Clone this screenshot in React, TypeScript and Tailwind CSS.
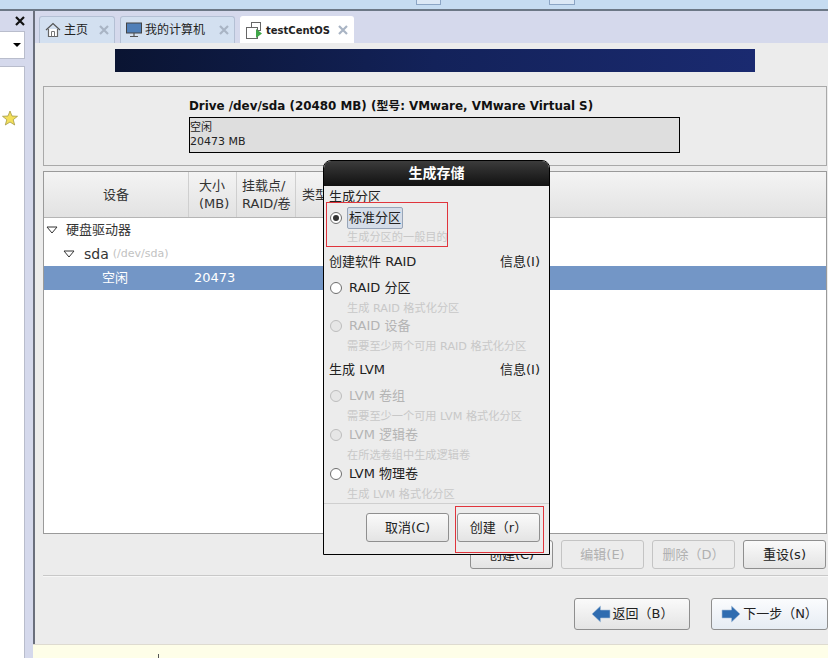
import React from 'react';

const font = { fontFamily: '"DejaVu Sans", "Noto Sans CJK SC", sans-serif' };

const CloseX = ({ className = 'text-[#a9b4c4]' }: { className?: string }) => (
  <svg width="10" height="10" viewBox="0 0 10 10" className={className}>
    <path d="M1 1 L9 9 M9 1 L1 9" stroke="currentColor" strokeWidth="2.2" />
  </svg>
);

const HomeIcon = () => (
  <svg width="16" height="16" viewBox="0 0 16 16" fill="none" className="shrink-0">
    <path d="M1 8 L8 1.5 L15 8" stroke="#555" strokeWidth="1.2" />
    <path d="M3.5 7 V14.5 H12.5 V7" stroke="#666" strokeWidth="1.2" fill="#fff" />
    <path d="M6.5 14.5 V9.5 H9.5 V14.5" stroke="#777" strokeWidth="1" />
  </svg>
);

const MonitorIcon = () => (
  <svg width="16" height="16" viewBox="0 0 16 16" className="shrink-0">
    <rect x="0.5" y="1" width="15" height="10" fill="#4f7fb8" stroke="#444" />
    <path d="M8 11 V14 M4 14.5 H12" stroke="#555" strokeWidth="1.2" />
  </svg>
);

const VmIcon = () => (
  <svg width="17" height="17" viewBox="0 0 17 17" fill="none" className="shrink-0">
    <rect x="5.5" y="0.5" width="9" height="8" stroke="#666" fill="#fff" />
    <rect x="0.5" y="5.5" width="11" height="11" stroke="#666" fill="#fff" />
    <path d="M10 7 L16 11.5 L10 16 Z" fill="#3fa648" />
  </svg>
);

const Tab = ({ icon, label, active, width }: { icon: React.ReactNode; label: string; active?: boolean; width: string }) => (
  <div
    className={`${width} h-[27px] flex items-center pl-[5px] pr-[5px] rounded-t-[3px] border border-b-0 ${
      active ? 'bg-white border-white' : 'bg-[#d3e0f0] border-[#b4c0d4]'
    }`}
  >
    {icon}
    <span className={`ml-[3px] text-[#222] whitespace-nowrap ${active ? 'font-bold text-[10px] ml-[2px]' : 'text-[12px]'}`}>{label}</span>
    <span className="ml-auto">
      <CloseX />
    </span>
  </div>
);

const Btn = ({ label, disabled, width = 'w-[83px]', height = 'h-[29px]', children, tint }: { label: string; disabled?: boolean; width?: string; height?: string; children?: React.ReactNode; tint?: boolean }) => (
  <div
    className={`${width} ${height} flex items-center justify-center gap-[2px] rounded-[3px] border text-[13px] ${
      disabled ? 'border-[#c4c4c4] text-[#b0b0b0] bg-[#ececec]' : 'border-[#8f8f8f] text-[#222]'
    } ${!disabled && tint ? 'bg-gradient-to-b from-[#fbfcfe] to-[#e6ecf3] border-[#7f8fa5]' : ''} ${
      !disabled && !tint ? 'bg-gradient-to-b from-[#fafafa] to-[#e4e4e4]' : ''
    }`}
  >
    {children}
    {label}
  </div>
);

const Radio = ({ checked, disabled }: { checked?: boolean; disabled?: boolean }) => (
  <span
    className={`w-[12px] h-[12px] shrink-0 rounded-full border flex items-center justify-center ${
      disabled ? 'border-[#bdbdbd] bg-[#e6e6e6]' : 'border-[#6e6e6e] bg-white'
    }`}
  >
    {checked && <span className="w-[6px] h-[6px] rounded-full bg-[#333]" />}
  </span>
);

const Option = ({ label, desc, disabled, checked, focus, heightClass = 'h-[39px]', descGap = 'mt-[4px]' }: { label: string; desc: string; disabled?: boolean; checked?: boolean; focus?: boolean; heightClass?: string; descGap?: string }) => (
  <div className={`${heightClass} pl-[6px] flex flex-col`}>
    <div className="flex items-center h-[20px]">
      <Radio checked={checked} disabled={disabled} />
      <span
        className={`text-[13px] leading-[20px] px-[1px] ${disabled ? 'text-[#b4b4b4]' : 'text-[#222]'} ${
          focus ? 'ml-[5px] bg-[#d5dde9] border border-[#98a5b8] rounded-[2px] leading-[18px]' : 'ml-[6px]'
        }`}
      >
        {label}
      </span>
    </div>
    <div className={`ml-[17px] ${descGap} text-[11.2px] leading-[14px] text-[#c8c8c8] whitespace-nowrap`}>{desc}</div>
  </div>
);

const SectionRow = ({ left, right }: { left: string; right?: string }) => (
  <div className="flex justify-between items-center pl-[5px] pr-[9px] h-[20px] text-[13px] text-[#222]">
    <span>{left}</span>
    {right && <span>{right}</span>}
  </div>
);

const Arrow = ({ dir }: { dir: 'left' | 'right' }) => (
  <svg width="20" height="18" viewBox="0 0 20 18" className={dir === 'right' ? 'scale-x-[-1]' : ''}>
    <path d="M1 9 L9.5 1 V5 H19 V13 H9.5 V17 Z" fill="#2f6cb0" stroke="#a8bfd8" strokeWidth="0.6" />
  </svg>
);

const Dialog = () => (
  <div className="absolute left-[323px] top-[160px] w-[227px] h-[395px] bg-[#ececec] border border-black rounded-t-[8px] flex flex-col">
    <div className="h-[25px] shrink-0 rounded-t-[7px] bg-gradient-to-b from-[#3c3c3c] to-[#111] text-white text-[14px] font-bold flex items-center justify-center">
      生成存储
    </div>
    <div className="pt-[1px]">
      <SectionRow left="生成分区" />
      <div className="mt-[1px]">
        <Option label="标准分区" desc="生成分区的一般目的" checked focus heightClass="h-[44px]" descGap="mt-[3px]" />
      </div>
      <SectionRow left="创建软件 RAID" right="信息(I)" />
      <div className="mt-[6px]">
        <Option label="RAID 分区" desc="生成 RAID 格式化分区" heightClass="h-[38px]" />
        <Option label="RAID 设备" desc="需要至少两个可用 RAID 格式化分区" disabled heightClass="h-[44px]" />
      </div>
      <SectionRow left="生成 LVM" right="信息(I)" />
      <div className="mt-[6px]">
        <Option label="LVM 卷组" desc="需要至少一个可用 LVM 格式化分区" disabled />
        <Option label="LVM 逻辑卷" desc="在所选卷组中生成逻辑卷" disabled />
        <Option label="LVM 物理卷" desc="生成 LVM 格式化分区" heightClass="h-[31px]" />
      </div>
    </div>
    <div className="mt-auto border-t border-[#cfcfcf] h-[51px] flex justify-end gap-[8px] pt-[9px] pr-[9px]">
      <Btn label="取消(C)" />
      <Btn label="创建（r）" />
    </div>
    {/* red annotation boxes */}
    <div className="absolute left-[2px] top-[41px] w-[122px] h-[45px] border border-[#e0343c]" />
    <div className="absolute left-[131px] top-[345px] w-[89px] h-[47px] border border-[#e0343c]" />
  </div>
);

export default function App() {
  return (
    <div className="relative w-[828px] h-[658px] overflow-hidden flex flex-col bg-[#d5d9ec]" style={font}>
      {/* host window toolbar strip */}
      <div className="h-[11px] shrink-0 bg-[#c6dcf1] border-b-2 border-[#6c7886] flex pl-[416px] gap-[108px]">
        <div className="w-[25px] h-[5px] bg-[#dce8f5] border border-t-0 border-[#8ca5c4]" />
        <div className="w-[26px] h-[5px] bg-[#dce8f5] border border-t-0 border-[#8ca5c4]" />
      </div>

      <div className="flex-1 flex min-h-0">
        {/* left library panel */}
        <div className="w-[25px] shrink-0 flex flex-col">
          <div className="h-[20px] flex items-center justify-end">
            <CloseX className="text-[#111]" />
          </div>
          <div className="h-[28px] bg-white border border-l-0 border-[#b9bdcc] flex items-center justify-end pr-[3px]">
            <span className="border-x-[4px] border-x-transparent border-t-[4px] border-t-black" />
          </div>
          <div className="flex-1 mt-[7px] bg-white border-t border-r border-[#b9bdcc] pt-[43px] pl-[2px]">
            <svg width="16" height="16" viewBox="0 0 16 16">
              <path d="M8 1 L10 6 L15.5 6.3 L11.2 9.7 L12.7 15 L8 12 L3.3 15 L4.8 9.7 L0.5 6.3 L6 6 Z" fill="#f3df5a" stroke="#a59a48" strokeWidth="0.8" />
            </svg>
          </div>
        </div>

        {/* main pane */}
        <div className="flex-1 flex flex-col min-w-0 ml-[8px]">
          <div className="flex-1 flex flex-col min-h-0 border-l-2 border-[#6a6f7c]">
            <div className="h-[32px] shrink-0 flex items-end gap-[5px] pl-[4px]">
              <Tab icon={<HomeIcon />} label="主页" width="w-[76px]" />
              <Tab icon={<MonitorIcon />} label="我的计算机" width="w-[115px]" />
              <Tab icon={<VmIcon />} label="testCentOS" active width="w-[114px]" />
            </div>

            <div className="flex-1 bg-[#ececec] min-h-0 flex flex-col">
              <div className="h-[23px] w-[640px] ml-[80px] mt-[6px] bg-gradient-to-r from-[#0a1432] via-[#13225a] to-[#1a2a70]" />

              {/* drive panel */}
              <div className="h-[80px] mt-[14px] ml-[8px] mr-[1px] border border-[#a9a9a9] pl-[145px] pt-[11px]">
                <div className="text-[11.9px] font-bold leading-[16px] text-[#111] whitespace-nowrap">Drive /dev/sda (20480 MB) (型号: VMware, VMware Virtual S)</div>
                <div className="w-[491px] h-[36px] mt-[3px] bg-[#dedede] border border-black pl-[0px] pt-[3px] text-[11px] leading-[14px] text-[#222]">
                  <div>空闲</div>
                  <div>20473 MB</div>
                </div>
              </div>

              {/* partition tree */}
              <div className="h-[363px] mt-[5px] ml-[8px] mr-[1px] border border-[#9a9a9a] bg-white flex flex-col">
                <div className="h-[46px] shrink-0 flex bg-gradient-to-b from-[#f4f4f4] to-[#e2e2e2] border-b border-[#b5b5b5] text-[13px] text-[#333] leading-[18px]">
                  <div className="w-[145px] border-r border-[#cfcfcf] flex items-center justify-center">设备</div>
                  <div className="w-[48px] border-r border-[#cfcfcf] flex items-center pl-[10px]">
                    <div>大小<br />(MB)</div>
                  </div>
                  <div className="w-[59px] border-r border-[#cfcfcf] flex items-center pl-[5px]">
                    <div>挂载点/<br />RAID/卷</div>
                  </div>
                  <div className="pl-[6px] flex items-center">类型</div>
                </div>
                <div className="h-[24px] flex items-center pl-[2px] text-[13px] text-[#333]">
                  <svg width="12" height="8" viewBox="0 0 12 8" fill="none"><path d="M1 1 H11 L6 7 Z" stroke="#333" /></svg>
                  <span className="ml-[8px]">硬盘驱动器</span>
                </div>
                <div className="h-[24px] flex items-center pl-[19px] text-[#333]">
                  <svg width="12" height="8" viewBox="0 0 12 8" fill="none"><path d="M1 1 H11 L6 7 Z" stroke="#333" /></svg>
                  <span className="ml-[9px] text-[14px]">sda</span>
                  <span className="ml-[4px] text-[11px] text-[#c2c2c2]">(/dev/sda)</span>
                </div>
                <div className="h-[24px] flex items-center bg-[#7396c6] text-white text-[13px]">
                  <span className="ml-[58px] w-[92px]">空闲</span>
                  <span>20473</span>
                </div>
              </div>

              {/* partition buttons */}
              <div className="flex justify-end gap-[8px] mt-[6px] mr-[2px]">
                <Btn label="创建(C)" />
                <Btn label="编辑(E)" disabled />
                <Btn label="删除（D）" disabled />
                <Btn label="重设(s)" />
              </div>
              <div className="h-[2px] mt-[6px] ml-[8px] bg-[#c8c8c8] border-b border-[#f6f6f6]" />

              {/* wizard nav */}
              <div className="flex justify-end gap-[21px] mt-[21px]">
                <Btn label="返回（B）" width="w-[116px]" height="h-[32px]"><Arrow dir="left" /></Btn>
                <Btn label="下一步（N）" width="w-[117px]" height="h-[32px]" tint><Arrow dir="right" /></Btn>
              </div>
            </div>
          </div>
          <div className="h-[14px] shrink-0 bg-[#fefee8] border-t border-[#dedbd0] pl-[125px] pt-[9px]">
            <div className="w-px h-[5px] bg-[#555]" />
          </div>
        </div>
      </div>

      <Dialog />
    </div>
  );
}
